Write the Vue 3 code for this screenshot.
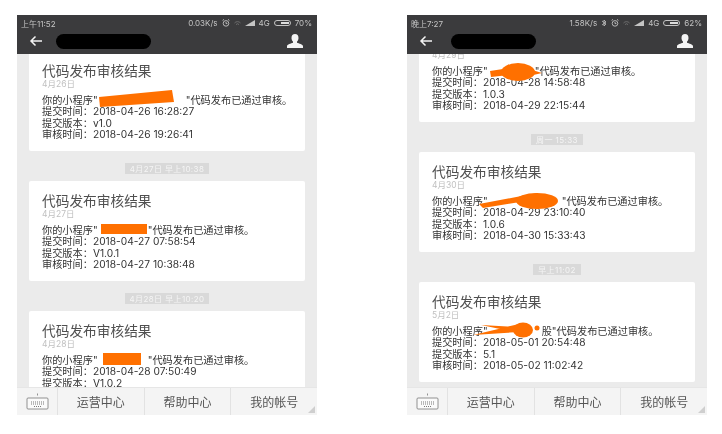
<script setup>
const phones = [
  {
    time: '上午11:52', speed: '0.03K/s', battery: '70%', bt: false, mask: 39, maskW: 95, first: -3,
    cards: [
      { date: '4月26日', gap: 88, tail: '"代码发布已通过审核。', sent: '2018-04-26 16:28:27', ver: 'v1.0', checked: '2018-04-26 19:26:41', shapes: [{ t: 'poly', p: '70,46 143,39 145,51 71,56' }] },
      { pill: '4月27日 早上10:38', date: '4月27日', gap: 50, tail: '"代码发布已通过审核。', sent: '2018-04-27 07:58:54', ver: 'V1.0.1', checked: '2018-04-27 10:38:48', shapes: [{ t: 'poly', p: '72,43 118,43 118,53 72,53' }] },
      { pill: '4月28日 早上10:20', date: '4月28日', gap: 50, tail: '"代码发布已通过审核。', sent: '2018-04-28 07:50:49', ver: 'V1.0.2', checked: '2018-04-28 10:20:11', shapes: [{ t: 'poly', p: '74,42 112,42 112,54 74,54' }] },
    ],
  },
  {
    time: '晚上7:27', speed: '1.58K/s', battery: '62%', bt: true, mask: 44, maskW: 85, first: -32,
    cards: [
      { date: '4月29日', gap: 47, tail: '"代码发布已通过审核。', sent: '2018-04-28 14:58:48', ver: '1.0.3', checked: '2018-04-29 22:15:44', shapes: [{ t: 'poly', p: '71,49 84,47 90,53 72,55' }, { t: 'ell', cx: 99, cy: 50, rx: 17, ry: 9 }, { t: 'poly', p: '110,47 123,51 110,54' }] },
      { pill: '周一 15:33', date: '4月30日', gap: 74, tail: '"代码发布已通过审核。', sent: '2018-04-29 23:10:40', ver: '1.0.6', checked: '2018-04-30 15:33:43', shapes: [{ t: 'poly', p: '60,52 118,41 120,47 64,56' }, { t: 'ell', cx: 118, cy: 49, rx: 21, ry: 8 }] },
      { pill: '早上11:02', date: '5月2日', gap: 54, tail: '股"代码发布已通过审核。', sent: '2018-05-01 20:54:48', ver: '5.1', checked: '2018-05-02 11:02:42', shapes: [{ t: 'poly', p: '54,53 100,42 100,51 62,43 100,45 100,50' }, { t: 'ell', cx: 104, cy: 48, rx: 10, ry: 7.5 }, { t: 'ell', cx: 118, cy: 46, rx: 2.5, ry: 2.5 }] },
    ],
  },
]
const menu = ['运营中心', '帮助中心', '我的帐号']
</script>

<template>
  <div class="page">
    <section v-for="phone in phones" :key="phone.time" class="phone">
      <div class="status">
        <span>{{ phone.time }}</span>
        <span class="status-right">
          <span>{{ phone.speed }}</span>
          <svg v-if="phone.bt" width="6" height="8" viewBox="0 0 6 8" fill="none" stroke="#c4c4c4" stroke-width=".8"><path d="M1 2l4 3-2 2V1l2 2-4 3" /></svg>
          <svg width="8" height="8" viewBox="0 0 8 8" fill="none" stroke="#c4c4c4" stroke-width=".9"><circle cx="4" cy="4.400" r="2.800" /><path d="M4 3v1.600h1.400M.6 1.400l1.400-1M7.400 1.400L6 .4" /></svg>
          <svg width="7" height="7" viewBox="0 0 7 7" fill="none" stroke="#777" stroke-width=".8"><path d="M.5 3a4 4 0 0 1 6 0M2 4.600a2 2 0 0 1 3 0" /></svg>
          <svg width="10" height="6" viewBox="0 0 10 6"><path d="M0 6L10 0v6z" fill="#c4c4c4" /></svg>
          <span>4G</span>
          <span class="battery"><i></i></span>
          <span>{{ phone.battery }}</span>
        </span>
      </div>
      <header class="nav">
        <svg class="back" width="14" height="12" viewBox="0 0 14 12" fill="none" stroke="#f4f4f4" stroke-width="1.500"><path d="M13 6H2M6.500 1.500L2 6l4.500 4.500" /></svg>
        <span class="mask" :style="{ marginLeft: phone.mask - 26 + 'px', width: phone.maskW + 'px' }"></span>
        <svg class="person" width="16" height="14" viewBox="0 0 16 14" fill="#f4f4f4"><path d="M8 0c2.300 0 3.500 1.700 3.500 3.900 0 1.500-.6 2.800-1.500 3.600v1.200c1.800.7 6 1.500 6 3.600V14H0v-1.700c0-2.100 4.200-2.900 6-3.600V7.500C5.100 6.700 4.500 5.400 4.500 3.900 4.500 1.700 5.700 0 8 0z" /></svg>
      </header>
      <main class="feed">
        <div class="stack" :style="{ marginTop: phone.first + 'px' }">
          <template v-for="card in phone.cards" :key="card.date">
            <div v-if="card.pill" class="pill">{{ card.pill }}</div>
            <article class="card">
              <h2>代码发布审核结果</h2>
              <p class="date">{{ card.date }}</p>
              <p class="line">你的小程序"<span class="gap" :style="{ width: card.gap + 'px' }"></span>{{ card.tail }}</p>
              <p class="line">提交时间：{{ card.sent }}</p>
              <p class="line">提交版本：{{ card.ver }}</p>
              <p class="line">审核时间：{{ card.checked }}</p>
              <svg class="scribble" width="276" height="100" viewBox="0 0 276 100" fill="#ff7000">
                <template v-for="(s, i) in card.shapes" :key="i">
                  <polygon v-if="s.t === 'poly'" :points="s.p" />
                  <ellipse v-else :cx="s.cx" :cy="s.cy" :rx="s.rx" :ry="s.ry" />
                </template>
              </svg>
            </article>
          </template>
        </div>
      </main>
      <footer class="menu">
        <div class="kbd">
          <svg width="23" height="17" viewBox="0 0 23 17" fill="none" stroke="#777" stroke-width=".8">
            <path d="M11.500 .5v2" />
            <rect x="1" y="5" width="21" height="11" rx="1" fill="#fafafa" />
            <path d="M5 9h13M5 11h13M8 13.500h7" stroke-dasharray="1 1" stroke-width="1.100" />
          </svg>
        </div>
        <div v-for="item in menu" :key="item" class="menu-item">{{ item }}</div>
        <svg class="corner" width="7" height="7" viewBox="0 0 7 7"><path d="M0 7L7 0v7z" fill="#cfcfcf" /></svg>
      </footer>
    </section>
  </div>
</template>

<style>
html, body { margin: 0; background: #fff; }
</style>

<style scoped>
.page {
  width: 722px;
  height: 434px;
  box-sizing: border-box;
  padding: 15px 0 0 17px;
  display: flex;
  gap: 90px;
  overflow: hidden;
  background: #fff;
  font-family: Inter, "Noto Sans CJK SC", sans-serif;
}
.phone {
  width: 300px;
  height: 400px;
  display: flex;
  flex-direction: column;
  filter: blur(0.6px);
}
.status {
  height: 16px;
  flex: none;
  padding: 0 5px 0 4px;
  display: flex;
  align-items: center;
  justify-content: space-between;
  background: #3b3b3d;
  color: #c4c4c4;
  font-size: 8px;
}
.status-right { display: flex; align-items: center; gap: 4px; }
.battery {
  width: 17px;
  height: 6px;
  box-sizing: border-box;
  padding: 1px 1px 1px 6px;
  border: 0.5px solid #c4c4c4;
  border-radius: 3px;
  display: flex;
}
.battery i { flex: 1; background: #ddd; }
.nav {
  height: 23px;
  flex: none;
  padding: 0 12px 3px;
  box-sizing: border-box;
  display: flex;
  align-items: center;
  background: #3b3b3d;
}
.back { flex: none; }
.mask {
  height: 15px;
  border-radius: 8px;
  background: #000;
}
.person { margin-left: auto; margin-right: 2px; }
.feed {
  flex: 1;
  min-height: 0;
  overflow: hidden;
  padding: 0 12px;
  background-color: #ebebeb;
  background-image: radial-gradient(#e3e3e3 .6px, transparent .7px);
  background-size: 2px 2px;
}
.stack { display: flex; flex-direction: column; }
.pill {
  align-self: center;
  margin: 12px 0 7px;
  height: 11px;
  padding: 0 5px;
  display: flex;
  align-items: center;
  background: #d9d9d9;
  color: #f5f5f5;
  font-size: 8px;
  letter-spacing: .4px;
}
.card {
  position: relative;
  height: 100px;
  flex: none;
  box-sizing: border-box;
  padding: 11px 13px 0;
  border-radius: 2px;
  background: #fff;
}
h2 {
  margin: 0;
  height: 18px;
  font-size: 13.700px;
  font-weight: 400;
  line-height: 18px;
  color: #505050;
}
.date {
  margin: -1px 0 5px;
  height: 11px;
  font-size: 8.500px;
  line-height: 11px;
  color: #c0c0c0;
}
.line {
  margin: 0;
  height: 11.300px;
  font-size: 10.200px;
  line-height: 11.300px;
  color: #333;
  white-space: nowrap;
}
.gap { display: inline-block; }
.scribble { position: absolute; left: 0; top: 0; }
.menu {
  position: relative;
  height: 28px;
  flex: none;
  display: flex;
  background: #f4f4f4;
  border-top: 1px solid #e6e6e6;
  box-sizing: border-box;
}
.kbd {
  width: 40px;
  flex: none;
  display: flex;
  align-items: center;
  justify-content: center;
}
.menu-item {
  flex: 1;
  display: flex;
  align-items: center;
  justify-content: center;
  border-left: 1px solid #e2e2e2;
  font-size: 12px;
  color: #555;
}
.corner { position: absolute; right: 2px; bottom: 2px; }
</style>
